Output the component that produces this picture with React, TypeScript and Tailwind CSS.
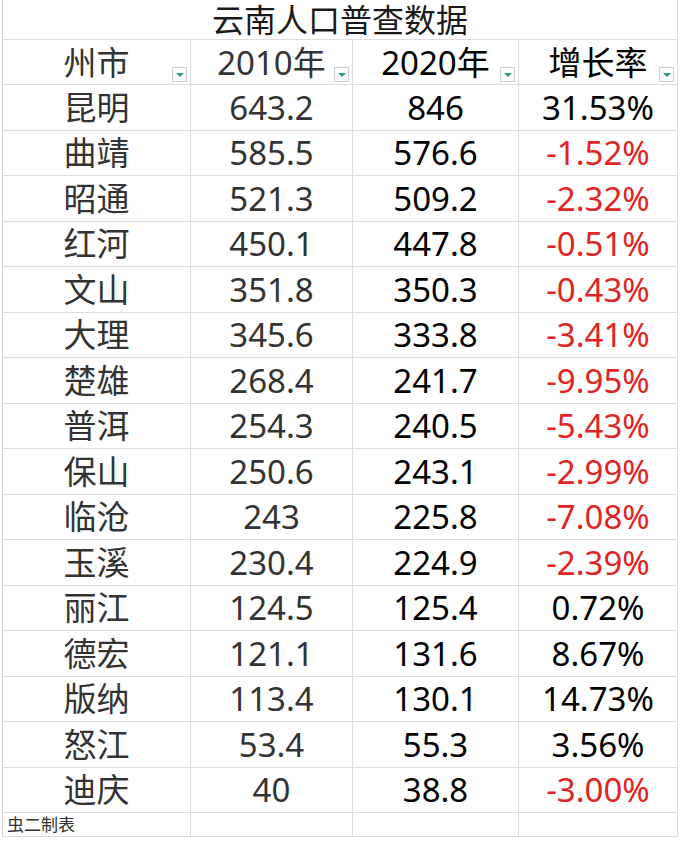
const rows: [string, string, string, string][] = [
  ["昆明", "643.2", "846", "31.53%"],
  ["曲靖", "585.5", "576.6", "-1.52%"],
  ["昭通", "521.3", "509.2", "-2.32%"],
  ["红河", "450.1", "447.8", "-0.51%"],
  ["文山", "351.8", "350.3", "-0.43%"],
  ["大理", "345.6", "333.8", "-3.41%"],
  ["楚雄", "268.4", "241.7", "-9.95%"],
  ["普洱", "254.3", "240.5", "-5.43%"],
  ["保山", "250.6", "243.1", "-2.99%"],
  ["临沧", "243", "225.8", "-7.08%"],
  ["玉溪", "230.4", "224.9", "-2.39%"],
  ["丽江", "124.5", "125.4", "0.72%"],
  ["德宏", "121.1", "131.6", "8.67%"],
  ["版纳", "113.4", "130.1", "14.73%"],
  ["怒江", "53.4", "55.3", "3.56%"],
  ["迪庆", "40", "38.8", "-3.00%"],
];

function FilterButton() {
  return (
    <span className="absolute right-[3px] bottom-[2px] flex h-[15px] w-[15px] items-center justify-center border border-[#cfcfcf] bg-[#fbfbfb]">
      <svg width="8" height="4" viewBox="0 0 8 4">
        <path d="M0 0h8L4 4z" fill="#2f9f6f" />
      </svg>
    </span>
  );
}

const cell = "flex items-center justify-center border-r border-b border-[#dcdcdc] h-[45.5px]";

export default function App() {
  return (
    <div
      className="w-[696px] h-[843px] bg-white pl-[2px] text-[33px] leading-none"
      style={{ fontFamily: '"Noto Sans", "Noto Sans CJK SC", sans-serif' }}
    >
      <div className="grid w-[675px] grid-cols-[188px_162px_166px_159px] border-l border-[#d0d0d0]">
        {/* title */}
        <div className="col-span-4 flex h-[40px] items-center justify-center border-r border-b border-[#dcdcdc] text-[32px] leading-[40px] text-[#1a1a1a]">
          云南人口普查数据
        </div>

        {/* header */}
        <div className={`${cell} relative !h-[45px] text-[#333]`}>
          州市
          <FilterButton />
        </div>
        <div className={`${cell} relative !h-[45px] text-[#333]`}>
          2010年
          <FilterButton />
        </div>
        <div className={`${cell} relative !h-[45px] text-black`}>
          2020年
          <FilterButton />
        </div>
        <div className={`${cell} relative !h-[45px] text-black`}>
          增长率
          <FilterButton />
        </div>

        {rows.map(([city, a, b, rate]) => (
          <div key={city} className="contents">
            <div className={`${cell} text-[#333]`}>{city}</div>
            <div className={`${cell} text-[#333]`}>{a}</div>
            <div className={`${cell} text-black`}>{b}</div>
            <div className={`${cell} ${rate.startsWith("-") ? "text-[#e02424]" : "text-black"}`}>
              {rate}
            </div>
          </div>
        ))}

        {/* footer */}
        <div className="flex h-[24px] items-center border-r border-b border-[#dcdcdc] pl-[4px] text-[17px] leading-[24px] text-[#333]">
          虫二制表
        </div>
        <div className="h-[24px] border-r border-b border-[#dcdcdc]" />
        <div className="h-[24px] border-r border-b border-[#dcdcdc]" />
        <div className="h-[24px] border-r border-b border-[#dcdcdc]" />
      </div>
    </div>
  );
}
